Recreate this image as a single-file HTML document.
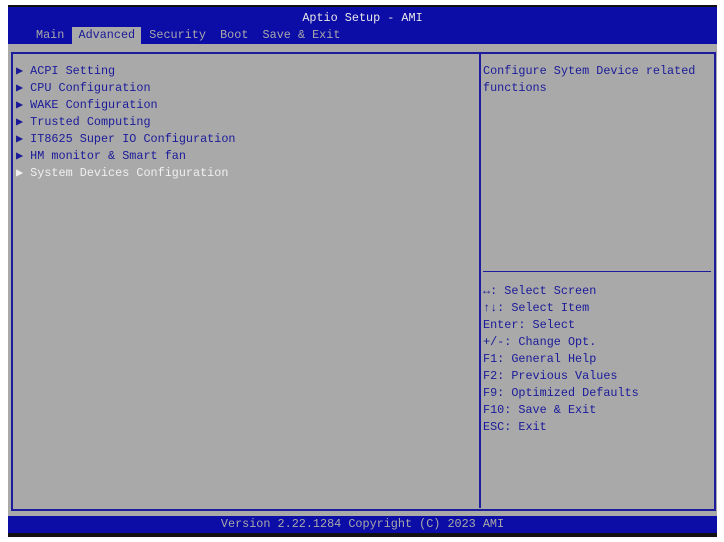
<!DOCTYPE html>
<html><head><style>
body{margin:0;width:724px;height:542px;background:#fff;position:relative;overflow:hidden;font-family:"Liberation Mono","DejaVu Sans Mono",monospace;font-size:11.8px;}
.a{position:absolute;}
.t{position:absolute;white-space:pre;line-height:17px;}
</style></head><body>
<div class="a" style="left:8px;top:5px;width:709px;height:2px;background:#111"></div>
<div class="a" style="left:8px;top:7px;width:709px;height:37px;background:#0c0ca6"></div>
<div class="t" style="left:8px;width:709px;top:10px;text-align:center;color:#e8e8e8">Aptio Setup - AMI</div>
<div class="a" style="left:72px;top:27px;width:69px;height:17px;background:#a9a9a9"></div>
<div class="t" style="left:36px;top:27px;color:#a9a9a9">Main  <span style="color:#1a1a9a">Advanced</span>  Security  Boot  Save &amp; Exit</div>
<div class="a" style="left:8px;top:44px;width:709px;height:472px;background:#a9a9a9"></div>
<div class="a" style="left:11px;top:52px;width:701px;height:455px;border:2px solid #1c1c9c"></div>
<div class="a" style="left:479px;top:53px;width:2px;height:455px;background:#1c1c9c"></div>
<div class="a" style="left:483px;top:271px;width:228px;height:1px;background:#1c1c9c"></div>
<div class="t" style="left:16px;top:63px;color:#1a1a9a">▶ ACPI Setting
▶ CPU Configuration
▶ WAKE Configuration
▶ Trusted Computing
▶ IT8625 Super IO Configuration
▶ HM monitor &amp; Smart fan
<span style="color:#f0f0f0">▶ System Devices Configuration</span></div>
<div class="t" style="left:483px;top:63px;color:#1a1a9a">Configure Sytem Device related
functions</div>
<div class="t" style="left:483px;top:283px;color:#1a1a9a">↔: Select Screen
↑↓: Select Item
Enter: Select
+/-: Change Opt.
F1: General Help
F2: Previous Values
F9: Optimized Defaults
F10: Save &amp; Exit
ESC: Exit</div>
<div class="a" style="left:8px;top:516px;width:709px;height:17px;background:#0c0ca6"></div>
<div class="a" style="left:8px;top:533px;width:709px;height:4px;background:#111"></div>
<div class="t" style="left:8px;width:709px;top:516px;text-align:center;color:#a9a9a9">Version 2.22.1284 Copyright (C) 2023 AMI</div>
</body></html>
